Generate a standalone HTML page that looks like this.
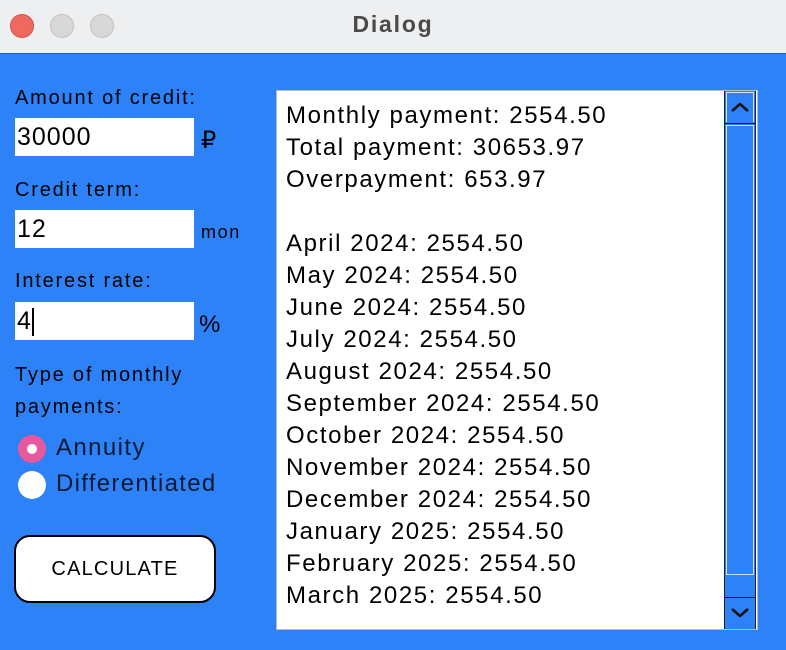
<!DOCTYPE html>
<html><head><style>
body{margin:0;width:786px;height:650px;background:#2d82f7;font-family:"Liberation Sans",sans-serif;position:relative;overflow:hidden}
.tb{position:absolute;left:0;top:0;width:786px;height:53px;background:#eeeff1;border-bottom:1px solid #1a5fc8}
.dot{position:absolute;top:14px;width:24px;height:24px;border-radius:50%;box-sizing:border-box}
.title{position:absolute;top:11px;width:786px;text-align:center;font-size:23px;font-weight:bold;color:#4a4a4a;letter-spacing:1.8px}
.l{position:absolute;left:15px;font-size:20px;color:#000;letter-spacing:1.8px}
.in{position:absolute;left:15px;width:179px;height:38px;background:#fff;font-size:25px;line-height:38px;padding-left:2px;box-sizing:border-box;letter-spacing:1px}
.u{position:absolute;color:#000}
.panel{position:absolute;left:276px;top:90px;width:482px;height:540px;background:#fff;border:1px solid #bbb;box-sizing:border-box}
.txt{position:absolute;left:286px;top:100px;font-size:24px;line-height:32px;color:#000;white-space:pre;letter-spacing:1.6px}
.sb{position:absolute;left:724px;top:91px;width:32px;height:538px;background:#2d82f7;border-left:1px solid #222;border-right:1px solid #222;box-sizing:border-box}
.rb{position:absolute;left:18px;width:28px;height:28px;border-radius:50%}
.btn{position:absolute;left:14px;top:535px;width:202px;height:68px;background:#fff;border:2px solid #000;border-radius:16px;box-sizing:border-box;font-size:20px;text-align:center;line-height:64px;letter-spacing:1.2px}
</style></head><body>
<div class="tb"></div>
<div class="dot" style="left:10px;background:#ee6a5f;border:1px solid #d35449"></div>
<div class="dot" style="left:50px;background:#d8d8d8;border:1px solid #c2c2c2"></div>
<div class="dot" style="left:90px;background:#d8d8d8;border:1px solid #c2c2c2"></div>
<div class="title">Dialog</div>
<div class="l" style="top:87px">Amount of credit:</div>
<div class="in" style="top:118px">30000</div>
<div class="u" style="left:201px;top:126px;font-size:24px">₽</div>
<div class="l" style="top:179px">Credit term:</div>
<div class="in" style="top:210px">12</div>
<div class="u" style="left:201px;top:222px;font-size:18px;letter-spacing:1.6px">mon</div>
<div class="l" style="top:270px">Interest rate:</div>
<div class="in" style="top:302px">4<span style="display:inline-block;width:2px;height:28px;background:#000;vertical-align:middle"></span></div>
<div class="u" style="left:199px;top:311px;font-size:24px">%</div>
<div class="l" style="top:359px;line-height:32px">Type of monthly<br>payments:</div>
<div class="rb" style="top:435px;background:#e8589c"><div style="position:absolute;left:9px;top:9px;width:10px;height:10px;border-radius:50%;background:#fff"></div></div>
<div class="u" style="left:56px;top:434px;font-size:24px;color:#0a1a33;letter-spacing:1.4px">Annuity</div>
<div class="rb" style="top:471px;background:#fff"></div>
<div class="u" style="left:56px;top:470px;font-size:24px;color:#0a1a33;letter-spacing:1.3px">Differentiated</div>
<div class="btn">CALCULATE</div>
<div class="panel"></div>
<div class="txt">Monthly payment: 2554.50
Total payment: 30653.97
Overpayment: 653.97

April 2024: 2554.50
May 2024: 2554.50
June 2024: 2554.50
July 2024: 2554.50
August 2024: 2554.50
September 2024: 2554.50
October 2024: 2554.50
November 2024: 2554.50
December 2024: 2554.50
January 2025: 2554.50
February 2025: 2554.50
March 2025: 2554.50</div>
<div class="sb">
<div style="position:absolute;left:1px;top:1px;width:28px;height:30px;border:1px solid #cfe2ff;box-sizing:border-box;border-bottom:none"></div>
<div style="position:absolute;left:0;top:32px;width:30px;height:1px;background:#111"></div>
<div style="position:absolute;left:1px;top:34px;width:28px;height:450px;border:1px solid #cfe2ff;box-sizing:border-box"></div>
<div style="position:absolute;left:0;top:506px;width:30px;height:1px;background:#111"></div>
<svg style="position:absolute;left:5px;top:10px" width="20" height="12"><path d="M2 10 L10 3 L18 10" stroke="#111" stroke-width="2.5" fill="none"/></svg>
<svg style="position:absolute;left:5px;top:516px" width="20" height="12"><path d="M2 2 L10 9 L18 2" stroke="#111" stroke-width="2.5" fill="none"/></svg>
</div>
</body></html>
